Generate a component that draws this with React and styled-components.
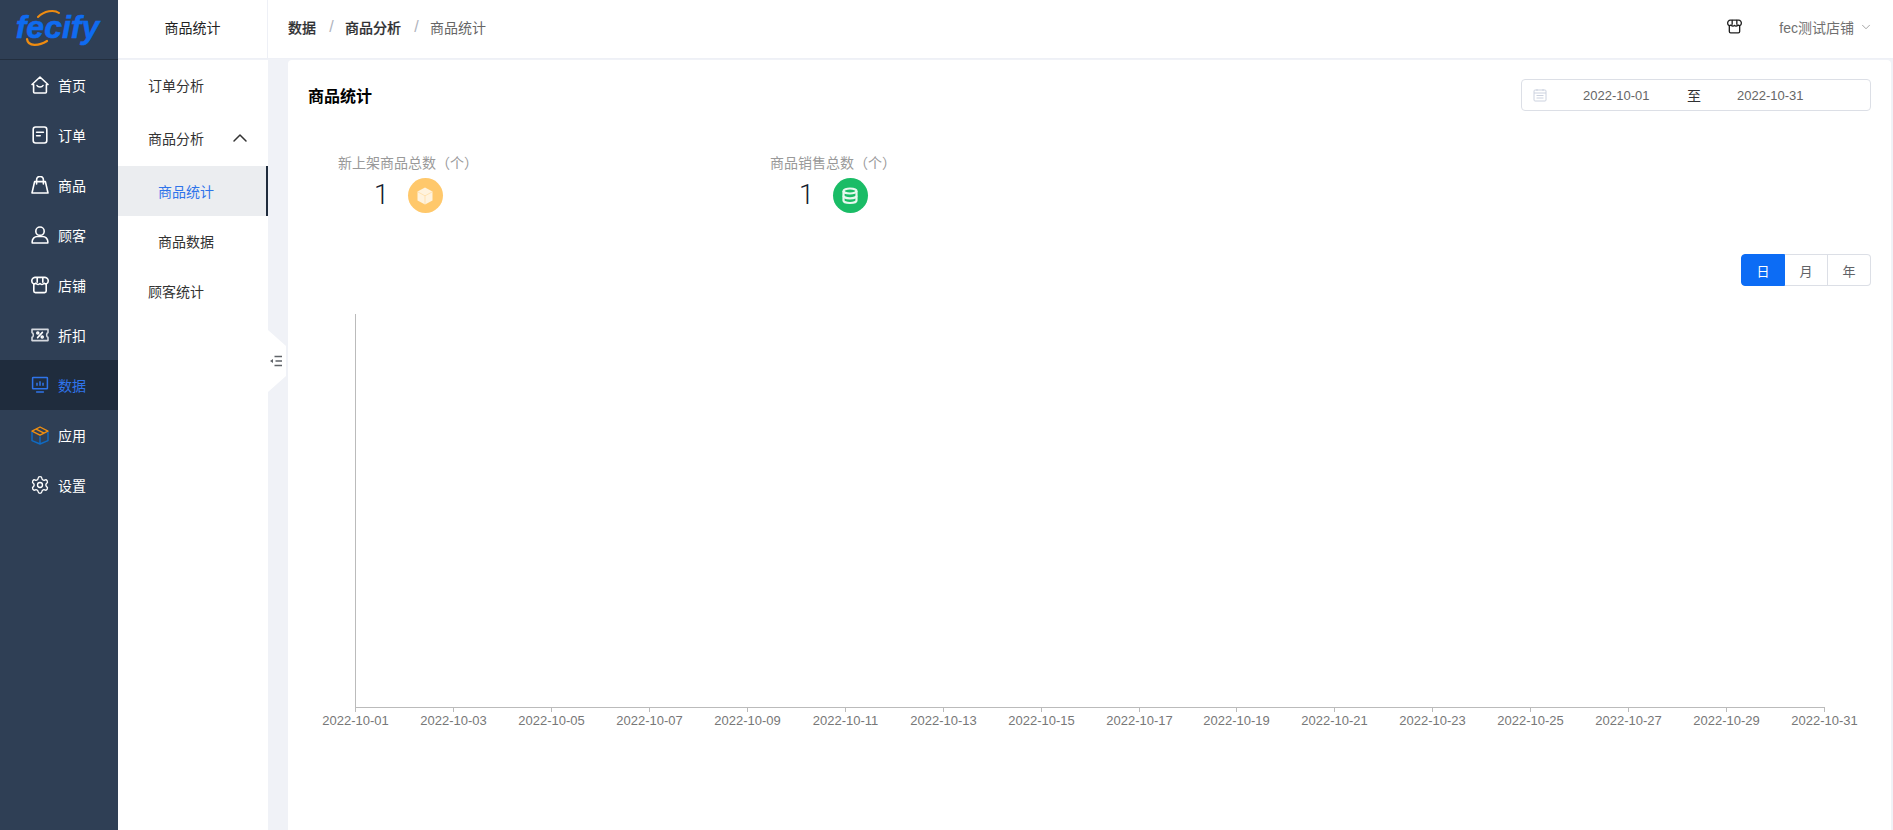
import styled, { createGlobalStyle } from 'styled-components';
import { ChevronUp, ChevronDown, Settings } from 'lucide-react';

const GlobalStyle = createGlobalStyle`
  html, body {
    margin: 0;
    height: 100%;
    overflow: hidden;
    background: #fff;
  }
  * {
    box-sizing: border-box;
  }
  body {
    font-family: "Liberation Sans", "Noto Sans CJK SC", sans-serif;
    font-size: 14px;
    color: #303133;
  }
`;

const Page = styled.div`
  display: flex;
  width: 1893px;
  height: 830px;
`;

const Nav = styled.nav`
  width: 118px;
  flex: none;
  background: #2f3f55;
`;

const LogoBox = styled.div`
  position: relative;
  height: 60px;
  border-bottom: 1px solid #232f3f;
  display: flex;
  align-items: center;
  justify-content: center;
`;

const LogoText = styled.span`
  position: relative;
  font-family: "Liberation Sans", sans-serif;
  font-size: 32px;
  font-weight: 700;
  font-style: italic;
  color: #0f6bf0;
  line-height: 1;
  margin: -5px 0 0 -3px;
  -webkit-text-stroke: 0.5px #0f6bf0;
`;

const LogoArc = styled.svg`
  position: absolute;
  left: 24px;
  top: 9px;
`;

const NavList = styled.div`
  display: flex;
  flex-direction: column;
`;

const NavItem = styled.div`
  height: 50px;
  display: flex;
  align-items: center;
  gap: 9px;
  padding-left: 31px;
  color: ${(p) => (p.$active ? '#2f74ea' : '#fff')};
  background: ${(p) => (p.$active ? '#1f2c3d' : 'transparent')};
  svg {
    flex: none;
  }
`;

const GearIcon = styled(Settings)`
  margin: 0 -1px;
`;

const RightCol = styled.div`
  flex: 1;
  min-width: 0;
  display: flex;
  flex-direction: column;
`;

const Header = styled.header`
  height: 59px;
  flex: none;
  display: flex;
  align-items: center;
  padding-bottom: 5px;
  border-bottom: 1px solid #eef0f6;
`;

const HeaderTitle = styled.div`
  width: 150px;
  height: 58px;
  margin-bottom: -5px;
  padding-bottom: 5px;
  flex: none;
  display: flex;
  align-items: center;
  justify-content: center;
  border-right: 1px solid #eef0f6;
  color: #222;
`;

const Crumbs = styled.div`
  display: flex;
  align-items: center;
  padding-left: 20px;
  flex: 1;
`;

const Crumb = styled.span`
  font-weight: ${(p) => (p.$current ? 400 : 500)};
  color: ${(p) => (p.$current ? '#666' : '#303133')};
  -webkit-text-stroke: ${(p) => (p.$current ? '0' : '0.2px')};
`;

const Slash = styled.span`
  color: #b0b4be;
  margin: 0 11px 0 13px;
  width: 5px;
  font-size: 16px;
  text-align: center;
`;

const ShopArea = styled.div`
  display: flex;
  align-items: center;
  padding-right: 20px;
`;

const ShopName = styled.span`
  display: flex;
  align-items: center;
  gap: 5px;
  margin-left: 37px;
  color: #707070;
  font-size: 14px;
`;

const Body = styled.div`
  flex: 1;
  display: flex;
  min-height: 0;
  background: #f0f2f7;
  padding: 1px 2px 0 0;
`;

const SubMenu = styled.aside`
  position: relative;
  width: 150px;
  flex: none;
  background: #fff;
`;

const SubItem = styled.div`
  height: ${(p) => p.$h || 50}px;
  display: flex;
  align-items: center;
  justify-content: space-between;
  padding: 0 16px 0 ${(p) => (p.$child ? 40 : 30)}px;
  color: ${(p) => (p.$active ? '#2f74ea' : '#333')};
  background: ${(p) => (p.$active ? '#ebedf0' : 'transparent')};
  border-right: ${(p) => (p.$active ? '2px solid #1f2c3d' : '0')};
`;

const CollapseTab = styled.div`
  position: absolute;
  left: 150px;
  top: 270px;
  width: 18px;
  height: 62px;
  background: #fff;
  clip-path: polygon(0 0, 100% 26%, 100% 74%, 0 100%);
  display: flex;
  align-items: center;
  justify-content: center;
  padding-right: 2px;
`;

const Gutter = styled.div`
  width: 20px;
  flex: none;
`;

const Card = styled.main`
  flex: 1;
  min-width: 0;
  background: #fff;
  border-radius: 4px 4px 0 0;
  overflow: hidden;
`;

const CardHead = styled.div`
  height: 70px;
  display: flex;
  align-items: center;
  justify-content: space-between;
  padding: 0 20px;
`;

const CardTitle = styled.h2`
  margin: 0;
  font-size: 16px;
  font-weight: 700;
  color: #000;
`;

const RangePicker = styled.div`
  width: 350px;
  height: 32px;
  border: 1px solid #dcdfe6;
  border-radius: 4px;
  display: flex;
  align-items: center;
  padding-left: 11px;
  color: #666;
  font-size: 13px;
`;

const DateValue = styled.span`
  width: 66px;
  margin-left: ${(p) => p.$ml}px;
  text-align: center;
  white-space: nowrap;
`;

const RangeSep = styled.span`
  margin-left: 38px;
  color: #303133;
  font-size: 14px;
`;

const Stats = styled.div`
  display: flex;
  padding-left: 50px;
  height: 76px;
  margin-top: 23px;
`;

const Stat = styled.div`
  width: ${(p) => p.$w}px;
`;

const StatLabel = styled.div`
  color: #999;
  line-height: 20px;
  white-space: nowrap;
`;

const StatRow = styled.div`
  display: flex;
  align-items: center;
  margin-top: 5px;
  margin-left: ${(p) => p.$ml}px;
  gap: 19px;
`;

const StatValue = styled.span`
  font-size: 27px;
  color: #14202e;
  line-height: 35px;
  font-family: Roboto, sans-serif;
  font-weight: 300;
`;

const StatIcon = styled.span`
  width: 35px;
  height: 35px;
  border-radius: 50%;
  background: ${(p) => p.$bg};
  display: flex;
  align-items: center;
  justify-content: center;
`;

const GroupRow = styled.div`
  display: flex;
  justify-content: flex-end;
  padding: 0 20px;
  margin-top: 25px;
`;

const Group = styled.div`
  display: flex;
`;

const GroupBtn = styled.button`
  width: ${(p) => p.$w}px;
  height: 32px;
  padding: 0;
  font: inherit;
  font-size: 13px;
  color: ${(p) => (p.$active ? '#fff' : '#606266')};
  background: ${(p) => (p.$active ? '#0c6cf5' : '#fff')};
  border: 1px solid ${(p) => (p.$active ? '#0c6cf5' : '#dcdfe6')};
  border-left-width: ${(p) => (p.$first || p.$active ? 1 : 0)}px;
  border-radius: ${(p) => (p.$first ? '4px 0 0 4px' : p.$last ? '0 4px 4px 0' : '0')};
`;

const ChartSvg = styled.svg`
  display: block;
  margin-top: 28px;
`;

const TickLabel = styled.text`
  font-family: "Liberation Sans", sans-serif;
  font-size: 13px;
  fill: #777;
  text-anchor: middle;
`;

const NAV_STROKE = { fill: 'none', stroke: '#fff', strokeWidth: 1.6, strokeLinecap: 'round', strokeLinejoin: 'round' };

const HomeIcon = () => (
  <svg width="18" height="18" viewBox="0 0 18 18" {...NAV_STROKE}>
    <path d="M1 8.5 9 1l8 7.5h-1.6V16a1 1 0 0 1-1 1H3.6a1 1 0 0 1-1-1V8.5z" />
    <path d="M6 9.5c1 2 5 2 6 0" />
  </svg>
);

const OrderIcon = () => (
  <svg width="18" height="18" viewBox="0 0 18 18" {...NAV_STROKE}>
    <rect x="2.2" y="1" width="13.6" height="16" rx="2.4" />
    <path d="M5.6 6.2h6.8M5.6 9.8h3.6" />
  </svg>
);

const BagIcon = () => (
  <svg width="18" height="18" viewBox="0 0 18 18" {...NAV_STROKE}>
    <path d="M3.6 5.6h10.8L17 17H1z" />
    <path d="M5.6 8V3.8a3.4 3.4 0 0 1 6.8 0V8" />
  </svg>
);

const UserIcon = () => (
  <svg width="18" height="18" viewBox="0 0 18 18" {...NAV_STROKE}>
    <circle cx="9" cy="5.2" r="4.2" />
    <path d="M1.2 17v-1.5c0-3 2.600-5 5-5h5.600c2.400 0 5 2 5 5V17z" />
  </svg>
);

const StoreIcon = ({ size = 18, color = '#fff' }) => (
  <svg width={size} height={size} viewBox="0 0 18 18" {...NAV_STROKE} stroke={color}>
    <path d="M4 1.400h10a3.400 3.400 0 0 1 3.200 3.600c0 2.600-2.600 3.600-4 2.200-1.400 1.600-3.200 1.600-4.200.4-1 1.200-2.800 1.200-4.200-.4-1.400 1.400-4 .4-4-2.200A3.400 3.400 0 0 1 4 1.400z" />
    <path d="M2.800 8.400V15a1.600 1.600 0 0 0 1.600 1.600h9.200a1.600 1.600 0 0 0 1.600-1.600V8.400M6.200 1.800v4.400M11.800 1.800v4.400" />
  </svg>
);

const DiscountIcon = () => (
  <svg width="18" height="18" viewBox="0 0 18 18" {...NAV_STROKE} strokeWidth="1.6" stroke="#d5d9df">
    <path d="M1 3.400h16v3.200c-1.800.4-1.800 4.400 0 4.800v3.200H1v-3.200c1.800-.4 1.800-4.400 0-4.800z" />
    <path d="M6.600 11.600l4.800-5.200" stroke="#fff" />
    <circle cx="6.800" cy="7" r="1" stroke="#fff" />
    <circle cx="11.200" cy="11" r="1" stroke="#fff" />
  </svg>
);

const DataIcon = () => (
  <svg width="18" height="18" viewBox="0 0 18 18" fill="none" stroke="#2f74ea" strokeWidth="1.500">
    <rect x="1.600" y="1.400" width="14.800" height="11.400" rx=".6" />
    <path d="M5.600 15.900h6.800" strokeLinecap="round" />
    <path d="M6 6.800v3M9 5.200v4.600M12 6.800v3" />
  </svg>
);

const AppIcon = () => (
  <svg width="18" height="19" viewBox="0 0 18 19" fill="none" strokeWidth="1.400" strokeLinejoin="round">
    <path d="M9 1 1 5.200l8 4 8-4z" stroke="#ef8f12" />
    <path d="M5 3.200l8 4" stroke="#ef8f12" />
    <path d="M1 6v8.600L9 18l8-3.400V6M9 10.400V18" stroke="#0f6bc4" />
  </svg>
);

const CalendarIcon = () => (
  <svg width="14" height="14" viewBox="0 0 14 14" fill="none" stroke="#ccd2df" strokeWidth="1">
    <rect x="1" y="2" width="12" height="11" rx="1" />
    <path d="M1 5h12M4 1v2M10 1v2M3.500 7.500h7M3.500 10h7" />
  </svg>
);

const CollapseIcon = () => (
  <svg width="12" height="12" viewBox="0 0 12 12" fill="none" stroke="#5f6368" strokeWidth="1.300">
    <path d="M4.500 1.500H12M5.500 6H12M4.500 10.500H12" />
    <path d="M0 6l3-2v4z" fill="#5f6368" stroke="none" />
  </svg>
);

const CubeIcon = () => (
  <svg width="20" height="20" viewBox="0 0 20 20">
    <path d="M10 1.500 17.500 5.500v9L10 18.500l-7.500-4v-9z" fill="#fff3de" />
    <path d="M3 6l7 3.800L17 6M10 9.800v8.400" stroke="#ffd995" strokeWidth=".6" fill="none" />
  </svg>
);

const DatabaseIcon = () => (
  <svg width="18" height="18" viewBox="0 0 18 18" fill="none" stroke="#e8f8ee" strokeWidth="2.200">
    <ellipse cx="9" cy="4" rx="6.500" ry="2.500" />
    <path d="M2.500 4v9.500c0 1.400 2.900 2.500 6.500 2.500s6.500-1.100 6.500-2.500V4" />
    <path d="M2.500 8.800c0 1.400 2.900 2.500 6.500 2.500s6.500-1.100 6.500-2.500" />
  </svg>
);

const NAV_ITEMS = [
  { label: '首页', icon: <HomeIcon /> },
  { label: '订单', icon: <OrderIcon /> },
  { label: '商品', icon: <BagIcon /> },
  { label: '顾客', icon: <UserIcon /> },
  { label: '店铺', icon: <StoreIcon /> },
  { label: '折扣', icon: <DiscountIcon /> },
  { label: '数据', icon: <DataIcon />, active: true },
  { label: '应用', icon: <AppIcon /> },
  { label: '设置', icon: <GearIcon size={20} color="#fff" strokeWidth={1.6} /> },
];

// chart origin inside the svg
const AXIS_X = 67;
const AXIS_TOP = 0;
const AXIS_BOTTOM = 393;
const DAY_W = 48.97;
const DAYS = Array.from({ length: 16 }, (_, i) => 1 + i * 2);

export default function App() {
  return (
    <Page>
      <GlobalStyle />
      <Nav>
        <LogoBox>
          <LogoText>fecify</LogoText>
          <LogoArc width="44" height="40" viewBox="0 0 44 40" fill="none">
            <path d="M14 8C20 2 30 0 35 4" stroke="#f08c10" strokeWidth="2" strokeLinecap="round" />
            <path d="M3 30c1 8 12 7 20 2" stroke="#f08c10" strokeWidth="2.200" strokeLinecap="round" />
          </LogoArc>
        </LogoBox>
        <NavList>
          {NAV_ITEMS.map((item) => (
            <NavItem key={item.label} $active={item.active}>
              {item.icon}
              {item.label}
            </NavItem>
          ))}
        </NavList>
      </Nav>

      <RightCol>
        <Header>
          <HeaderTitle>商品统计</HeaderTitle>
          <Crumbs>
            <Crumb>数据</Crumb>
            <Slash>/</Slash>
            <Crumb>商品分析</Crumb>
            <Slash>/</Slash>
            <Crumb $current>商品统计</Crumb>
          </Crumbs>
          <ShopArea>
            <StoreIcon size={15} color="#222" />
            <ShopName>
              fec测试店铺
              <ChevronDown size={14} color="#888" strokeWidth={1.3} />
            </ShopName>
          </ShopArea>
        </Header>

        <Body>
          <SubMenu>
            <SubItem>订单分析</SubItem>
            <SubItem $h={56}>
              商品分析
              <ChevronUp size={24} color="#333" strokeWidth={1.500} />
            </SubItem>
            <SubItem $child $active>商品统计</SubItem>
            <SubItem $child>商品数据</SubItem>
            <SubItem>顾客统计</SubItem>
            <CollapseTab>
              <CollapseIcon />
            </CollapseTab>
          </SubMenu>
          <Gutter />
          <Card>
            <CardHead>
              <CardTitle>商品统计</CardTitle>
              <RangePicker>
                <CalendarIcon />
                <DateValue $ml={36}>2022-10-01</DateValue>
                <RangeSep>至</RangeSep>
                <DateValue $ml={36}>2022-10-31</DateValue>
              </RangePicker>
            </CardHead>
            <Stats>
              <Stat $w={432}>
                <StatLabel>新上架商品总数（个）</StatLabel>
                <StatRow $ml={36}>
                  <StatValue>1</StatValue>
                  <StatIcon $bg="#ffc86b"><CubeIcon /></StatIcon>
                </StatRow>
              </Stat>
              <Stat $w={433}>
                <StatLabel>商品销售总数（个）</StatLabel>
                <StatRow $ml={29}>
                  <StatValue>1</StatValue>
                  <StatIcon $bg="#1abc66"><DatabaseIcon /></StatIcon>
                </StatRow>
              </Stat>
            </Stats>
            <GroupRow>
              <Group>
                <GroupBtn $w={44} $first $active>日</GroupBtn>
                <GroupBtn $w={43}>月</GroupBtn>
                <GroupBtn $w={43} $last>年</GroupBtn>
              </Group>
            </GroupRow>
            <ChartSvg width="1603" height="480" viewBox="0 0 1603 480">
              <path d={`M${AXIS_X + 0.5} ${AXIS_TOP}V${AXIS_BOTTOM}`} stroke="#bbb" fill="none" />
              <path d={`M${AXIS_X} ${AXIS_BOTTOM + 0.5}H${AXIS_X + DAY_W * 30}`} stroke="#bbb" fill="none" />
              {DAYS.map((day) => {
                const x = Math.round(AXIS_X + DAY_W * (day - 1)) + 0.5;
                return (
                  <g key={day}>
                    <path d={`M${x} ${AXIS_BOTTOM}v5`} stroke="#bbb" fill="none" />
                    <TickLabel x={x} y={AXIS_BOTTOM + 18}>
                      {`2022-10-${String(day).padStart(2, '0')}`}
                    </TickLabel>
                  </g>
                );
              })}
            </ChartSvg>
          </Card>
        </Body>
      </RightCol>
    </Page>
  );
}
